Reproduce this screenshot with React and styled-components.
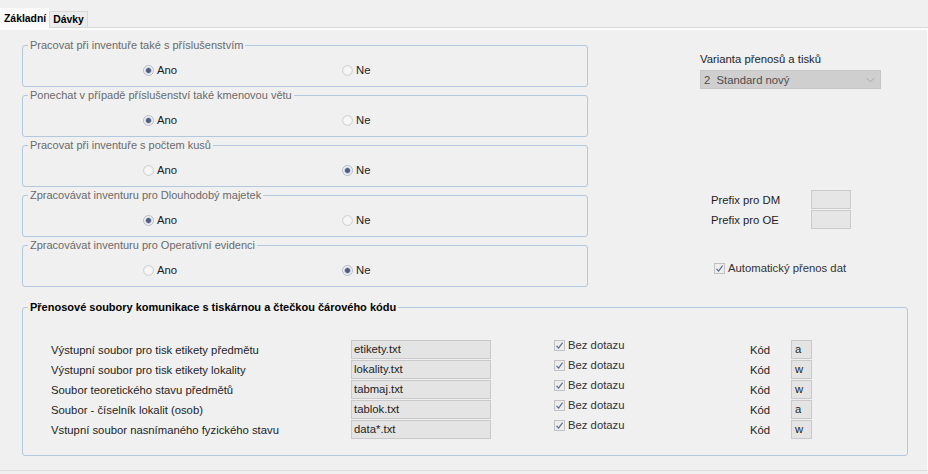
import React from 'react';
import styled, { createGlobalStyle } from 'styled-components';

const GlobalStyle = createGlobalStyle`
  html, body {
    margin: 0;
    padding: 0;
    background: #f0f0f0;
  }
  body {
    font-family: "Liberation Sans", Arial, sans-serif;
    font-size: 11.3px;
    color: #1e1e1e;
  }
`;

const groups = [
  { title: 'Pracovat při inventuře také s příslušenstvím', value: 'ano' },
  { title: 'Ponechat v případě příslušenství také kmenovou větu', value: 'ano' },
  { title: 'Pracovat při inventuře s počtem kusů', value: 'ne' },
  { title: 'Zpracovávat inventuru pro Dlouhodobý majetek', value: 'ano' },
  { title: 'Zpracovávat inventuru pro Operativní evidenci', value: 'ne' },
];

const files = [
  { label: 'Výstupní soubor pro tisk etikety předmětu', file: 'etikety.txt', code: 'a' },
  { label: 'Výstupní soubor pro tisk etikety lokality', file: 'lokality.txt', code: 'w' },
  { label: 'Soubor teoretického stavu předmětů', file: 'tabmaj.txt', code: 'w' },
  { label: 'Soubor - číselník lokalit (osob)', file: 'tablok.txt', code: 'a' },
  { label: 'Vstupní soubor nasnímaného fyzického stavu', file: 'data*.txt', code: 'w' },
];

function Radio({ checked, label }) {
  return (
    <RadioItem>
      <RadioDot checked={checked} />
      <span>{label}</span>
    </RadioItem>
  );
}

function Check({ label }) {
  return (
    <CheckItem>
      <CheckBox>
        <svg width="9" height="9" viewBox="0 0 9 9">
          <path d="M1.5 4.8 L3.6 7 L7.6 1.6" fill="none" stroke="#5b6a95" strokeWidth="1.2" />
        </svg>
      </CheckBox>
      <span>{label}</span>
    </CheckItem>
  );
}

export default function App() {
  return (
    <>
      <GlobalStyle />
      <Page>
        <TabBar>
          <Tab active>Základní</Tab>
          <Tab>Dávky</Tab>
        </TabBar>
        <Panel>
          <TopSection>
            <LeftCol>
              {groups.map(g => (
                <Group key={g.title}>
                  <Legend>{g.title}</Legend>
                  <RadioRow>
                    <Radio checked={g.value === 'ano'} label="Ano" />
                    <Radio checked={g.value === 'ne'} label="Ne" />
                  </RadioRow>
                </Group>
              ))}
            </LeftCol>
            <RightCol>
              <FieldLabel>Varianta přenosů a tisků</FieldLabel>
              <Select>
                <span>2&nbsp;&nbsp;Standard nový</span>
                <svg width="9" height="6" viewBox="0 0 9 6">
                  <path d="M0.5 0.8 L4.5 4.8 L8.5 0.8" fill="none" stroke="#a9a9a9" strokeWidth="1" />
                </svg>
              </Select>
              <Prefixes>
                <PrefixRow>
                  <span>Prefix pro DM</span>
                  <SmallBox />
                </PrefixRow>
                <PrefixRow>
                  <span>Prefix pro OE</span>
                  <SmallBox />
                </PrefixRow>
              </Prefixes>
              <AutoRow>
                <Check label="Automatický přenos dat" />
              </AutoRow>
            </RightCol>
          </TopSection>

          <FilesGroup>
            <Legend bold>Přenosové soubory komunikace s tiskárnou a čtečkou čárového kódu</Legend>
            <FileGrid>
              {files.map(f => (
                <React.Fragment key={f.label}>
                  <RowLabel>{f.label}</RowLabel>
                  <TextBox>{f.file}</TextBox>
                  <span />
                  <CheckCell>
                    <Check label="Bez dotazu" />
                  </CheckCell>
                  <RowLabel>Kód</RowLabel>
                  <CodeBox>{f.code}</CodeBox>
                </React.Fragment>
              ))}
            </FileGrid>
          </FilesGroup>
        </Panel>
      </Page>
    </>
  );
}

const Page = styled.div`
  width: 928px;
  height: 474px;
  background: #f0f0f0;
  overflow: hidden;
`;

const TabBar = styled.div`
  height: 27px;
  display: flex;
  align-items: flex-end;
  border-bottom: 1px solid #d9d9d9;
`;

const Tab = styled.div`
  height: ${p => (p.active ? '19px' : '15px')};
  line-height: ${p => (p.active ? '19px' : '16px')};
  padding: ${p => (p.active ? '0 2px 0 3px' : '0 3px 0 3px')};
  font-size: 10.4px;
  font-weight: bold;
  color: #000;
  background: ${p => (p.active ? '#fafafa' : '#ececec')};
  border: 1px solid ${p => (p.active ? '#fafafa' : '#d9d9d9')};
  border-bottom: none;
  margin-bottom: ${p => (p.active ? '-1px' : '0')};
`;

const Panel = styled.div`
  height: 440px;
  border-top: 2px solid #fbfbfb;
  border-right: 1px solid #fbfbfb;
  border-bottom: 1px solid #dedede;
  box-sizing: content-box;
`;

const TopSection = styled.div`
  display: flex;
  padding-left: 22px;
  gap: 112px;
`;

const LeftCol = styled.div`
  width: 566px;
  padding-top: 9px;
`;

const Group = styled.fieldset`
  margin: 0 0 2px 0;
  padding: 10px 0 8px 0;
  border: 1px solid #b3c8dd;
  border-radius: 3px;
  min-width: 0;
`;

const Legend = styled.legend`
  margin-left: 5px;
  padding: 0 2px;
  font-size: 11px;
  line-height: 13px;
  color: ${p => (p.bold ? '#000' : '#6a6a6a')};
  font-weight: ${p => (p.bold ? 'bold' : 'normal')};
`;

const RadioRow = styled.div`
  display: grid;
  grid-template-columns: 199px auto;
  padding-left: 120px;
  height: 16px;
  align-items: center;
`;

const RadioItem = styled.label`
  display: flex;
  align-items: center;
  gap: 3px;
  color: #222;
`;

const RadioDot = styled.span`
  width: 11px;
  height: 11px;
  box-sizing: border-box;
  border-radius: 50%;
  border: 1px solid ${p => (p.checked ? '#b4bccb' : '#d2d2d2')};
  background: ${p =>
    p.checked
      ? 'radial-gradient(circle, #4f5d80 0 2px, #9aa6bf 2.6px, #e9ecf2 3.4px, #f3f3f3 4.5px)'
      : 'radial-gradient(circle, #f6f6f6 0 3px, #ececec 4.5px)'};
`;

const RightCol = styled.div`
  width: 200px;
  padding-top: 22px;
  display: flex;
  flex-direction: column;
`;

const FieldLabel = styled.div`
  line-height: 15px;
  color: #1e1e1e;
`;

const Select = styled.div`
  margin-top: 3px;
  width: 181px;
  height: 19px;
  box-sizing: border-box;
  background: #cfcfcf;
  border: 1px solid #c6c6c6;
  display: flex;
  align-items: center;
  justify-content: space-between;
  padding: 0 5px 0 3px;
  color: #4d4d4d;
`;

const Prefixes = styled.div`
  margin-top: 101px;
  padding-left: 11px;
  display: flex;
  flex-direction: column;
  gap: 1px;
`;

const PrefixRow = styled.div`
  display: grid;
  grid-template-columns: 100px 40px;
  align-items: center;
  color: #1e1e1e;
`;

const SmallBox = styled.div`
  height: 19px;
  box-sizing: border-box;
  background: #e6e6e6;
  border: 1px solid #cbcbcb;
`;

const AutoRow = styled.div`
  margin-top: 33px;
  padding-left: 14px;
`;

const CheckItem = styled.label`
  display: flex;
  align-items: center;
  gap: 3px;
  color: #333;
`;

const CheckBox = styled.span`
  width: 11px;
  height: 11px;
  box-sizing: border-box;
  border: 1px solid #c2c2c2;
  background: #ededed;
  display: flex;
  align-items: center;
  justify-content: center;
`;

const FilesGroup = styled.fieldset`
  margin: 12px 0 0 22px;
  width: 886px;
  box-sizing: border-box;
  padding: 26px 0 16px 0;
  border: 1px solid #b3c8dd;
  border-radius: 3px;
  min-width: 0;
`;

const FileGrid = styled.div`
  display: grid;
  grid-template-columns: 300px 140px 63px 196px 41px 21px;
  grid-auto-rows: 19px;
  row-gap: 1px;
  align-items: center;
  padding-left: 28px;
`;

const RowLabel = styled.div`
  color: #1e1e1e;
  white-space: nowrap;
`;

const TextBox = styled.div`
  height: 19px;
  box-sizing: border-box;
  background: #e4e4e4;
  border: 1px solid #c9c9c9;
  padding-left: 2px;
  line-height: 17px;
  color: #1e1e1e;
`;

const CheckCell = styled.div`
  align-self: start;
  margin-top: -1px;
`;

const CodeBox = styled(TextBox)`
  padding-left: 3px;
`;
